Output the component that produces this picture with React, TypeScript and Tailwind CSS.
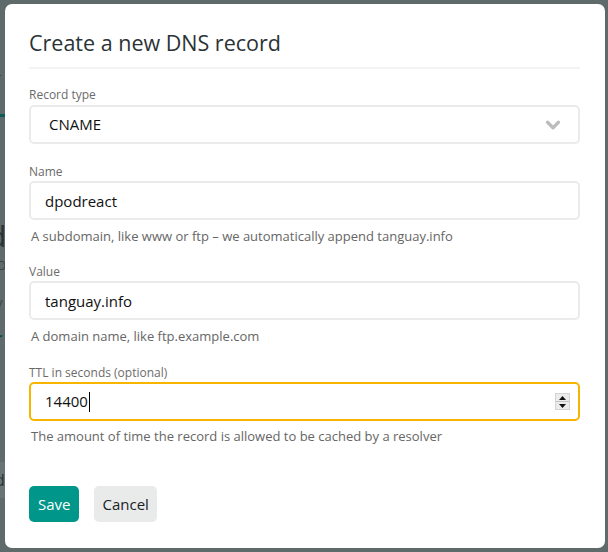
import { ChevronDown } from "lucide-react";

const font = { fontFamily: '"Open Sans", "Noto Sans", sans-serif' };

function Field({
  label,
  value,
  help,
}: {
  label: string;
  value: string;
  help?: string;
}) {
  return (
    <div>
      <label className="block text-[12px] leading-4 text-[#6b6b6b]">{label}</label>
      <input
        readOnly
        value={value}
        className="mt-[1px] h-[39px] w-full rounded-[5px] border-2 border-[#ebebeb] bg-white px-[14px] text-[15px] text-[#111] outline-none"
      />
      {help ? <p className="mt-[6px] pl-[2px] text-[13px] leading-5 text-[#666]">{help}</p> : null}
    </div>
  );
}

export default function App() {
  return (
    <div className="relative h-[552px] w-[608px] overflow-hidden bg-[#5f6a6b]" style={font}>
      {/* dimmed page behind the dialog */}
      <div className="absolute left-[-14px] top-[26px] text-[30px] leading-8 text-[#1e2628]">t</div>
      <div className="absolute left-[-4px] top-[68px] text-[13px] text-[#3c4546]">r</div>
      <div className="absolute left-0 top-[114px] h-[3px] w-[6px] bg-[#0e5c57]" />
      <div className="absolute left-[-12px] top-[222px] text-[30px] leading-[28px] text-[#2a3335]">d</div>
      <div className="absolute left-[-3px] top-[257px] text-[13px] leading-4 text-[#3c4546]">D</div>
      <div className="absolute left-[-4px] top-[293px] text-[13px] text-[#3c4546]">v</div>
      <div className="absolute left-[-4px] top-[327px] text-[14px] font-bold text-[#0e4e4a]">r</div>
      <div className="absolute left-0 top-[462px] h-[36px] w-[6px] bg-[#6b7475]" />
      <div className="absolute left-[-5px] top-[468px] text-[16px] text-[#2a3335]">d</div>

      <div className="relative ml-[5px] mt-[4px] h-[544px] w-[600px] rounded-[7px] bg-white pl-[24px] pr-[25px] pt-[24px]">
        <h2 className="text-[21.5px] font-normal leading-[30px] text-[#2b3336]">Create a new DNS record</h2>
        <div className="mt-[9px] h-[2px] bg-[#f3f3f3]" />

        <div className="mt-[18px]">
          <label className="block text-[12px] leading-4 text-[#6b6b6b]">Record type</label>
          <div className="mt-[2px] flex h-[39px] items-center justify-between rounded-[5px] border-2 border-[#ebebeb] bg-white pl-[18px] pr-[14px]">
            <span className="text-[15px] text-[#111]">CNAME</span>
            <ChevronDown className="h-[22px] w-[22px] text-[#bcbcbc]" strokeWidth={3.5} />
          </div>
        </div>

        <div className="mt-[20px]">
          <Field
            label="Name"
            value="dpodreact"
            help="A subdomain, like www or ftp – we automatically append tanguay.info"
          />
        </div>

        <div className="mt-[18px]">
          <Field label="Value" value="tanguay.info" help="A domain name, like ftp.example.com" />
        </div>

        <div className="mt-[19px]">
          <label className="block text-[12px] leading-4 text-[#6b6b6b]">TTL in seconds (optional)</label>
          <div className="mt-[1px] flex h-[39px] items-center justify-between rounded-[5px] border-2 border-[#f7b500] bg-white pl-[14px] pr-[8px]">
            <span className="flex items-center text-[15px] text-[#111]">
              14400
              <span className="ml-[1px] inline-block h-[20px] w-[1px] bg-black" />
            </span>
            <span className="flex h-[17px] w-[15px] flex-col border border-[#d4d4d4] bg-[#ececec]">
              <span className="flex flex-1 items-center justify-center border-b border-[#c4c4c4]">
                <svg width="7" height="4" viewBox="0 0 7 4">
                  <path d="M3.5 0 L7 4 L0 4 Z" fill="#111" />
                </svg>
              </span>
              <span className="flex flex-1 items-center justify-center">
                <svg width="7" height="4" viewBox="0 0 7 4">
                  <path d="M0 0 L7 0 L3.5 4 Z" fill="#111" />
                </svg>
              </span>
            </span>
          </div>
          <p className="mt-[5px] pl-[2px] text-[13px] leading-5 text-[#666]">
            The amount of time the record is allowed to be cached by a resolver
          </p>
        </div>

        <div className="mt-[40px] flex gap-[15px]">
          <button className="h-[36px] rounded-[5px] bg-[#00968a] px-[9px] text-[15px] text-white">Save</button>
          <button className="h-[36px] rounded-[5px] bg-[#e9eaea] px-[8px] text-[15px] text-[#1b2226]">Cancel</button>
        </div>
      </div>
    </div>
  );
}
